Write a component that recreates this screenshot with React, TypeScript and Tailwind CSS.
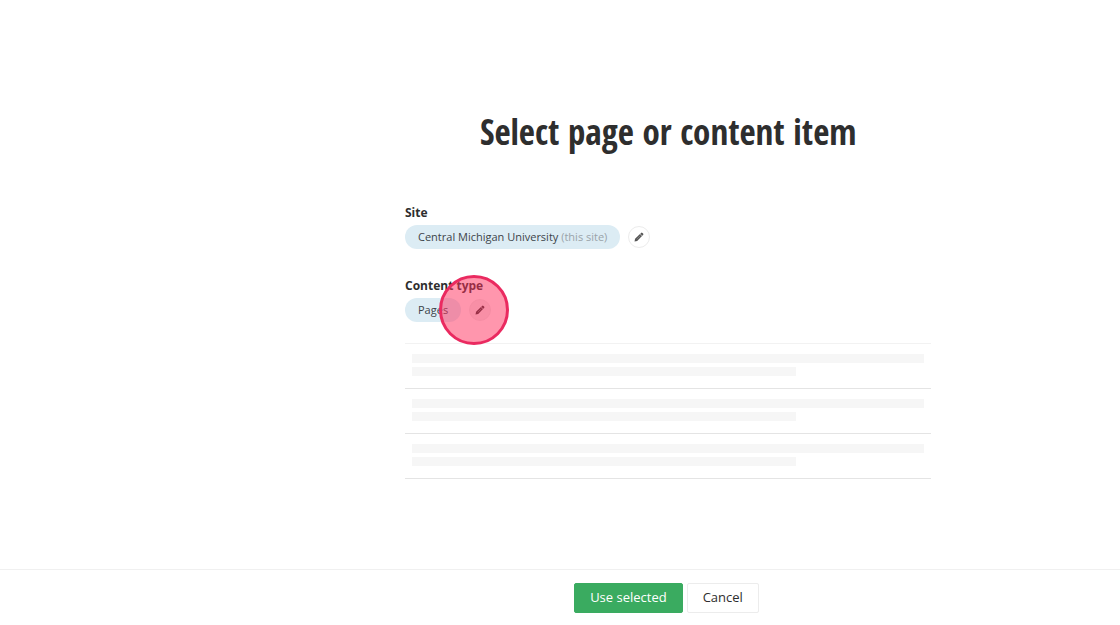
import clsx from "clsx";

const PencilIcon = () => {
  return (
    <svg viewBox="0 0 20 20" className="size-[10px]" fill="currentColor" aria-hidden="true">
      <path d="M1 19l1.2-5.4L12 4l4 4-9.6 9.8z" />
      <path d="M12.6 3.4l1.6-1.6a1.8 1.8 0 0 1 2.6 0l1.4 1.4a1.8 1.8 0 0 1 0 2.6l-1.6 1.6z" />
      <path d="M5.5 14.5l7.5-7.5" stroke="#a3a3a3" strokeWidth="1" />
    </svg>
  );
};

interface FieldProps {
  label: string;
  value: string;
  note?: string;
  highlighted?: boolean;
}

const Field = ({ label, value, note, highlighted }: FieldProps) => {
  return (
    <div>
      <h2 className="text-[12px] leading-4 font-bold">{label}</h2>
      <div className="mt-1 flex items-center gap-2">
        <span className="h-6 rounded-full bg-[#dcecf4] px-[13px] text-[11px] leading-6 text-[#3c444a]">
          {value}
          {note && <span className="text-[#9aa3a9]"> {note}</span>}
        </span>
        <div className="relative">
          <button
            type="button"
            aria-label={`Edit ${label}`}
            className={clsx(
              "flex size-[22px] items-center justify-center rounded-full border border-[#ececec]",
              highlighted ? "bg-[#f0f0f0] text-[#2e2e2e]" : "bg-white text-[#555555]"
            )}
          >
            <PencilIcon />
          </button>
          {highlighted && (
            <div className="pointer-events-none absolute -top-6 -left-[30px] size-[70px] rounded-full border-3 border-[#ea2a60] bg-[#ff2d5c]/50" />
          )}
        </div>
      </div>
    </div>
  );
};

const PlaceholderRow = () => {
  return (
    <li className="border-b border-[#e4e4e4] px-[7px] pt-[10px] pb-3">
      <div className="h-[9px] bg-[#f6f6f6]" />
      <div className="mt-1 h-[9px] w-3/4 bg-[#f6f6f6]" />
    </li>
  );
};

const App = () => {
  return (
    <div className="flex min-h-screen flex-col bg-white font-['Open_Sans',sans-serif] text-[#2e2e2e]">
      <main className="ml-[405px] w-[47%] grow pt-[110px]">
        <h1 className="text-center font-['Open_Sans_Condensed','Open_Sans',sans-serif] text-[35px] leading-[44px] font-bold">
          Select page or content item
        </h1>
        <div className="mt-[51px] flex flex-col gap-[29px]">
          <Field label="Site" value="Central Michigan University" note="(this site)" />
          <Field label="Content type" value="Pages" highlighted />
        </div>
        <ul className="mt-[21px] border-t border-[#f2f2f2]">
          <PlaceholderRow />
          <PlaceholderRow />
          <PlaceholderRow />
        </ul>
      </main>
      <footer className="flex h-14 items-center justify-center gap-1 border-t border-[#f0f0f0] pl-[213px] text-[13px]">
        <button
          type="button"
          className="h-[30px] rounded-xs border border-[#3aab60] bg-[#3aab60] px-[15px] text-white"
        >
          Use selected
        </button>
        <button type="button" className="h-[30px] rounded-xs border border-[#ececec] px-[15px]">
          Cancel
        </button>
      </footer>
    </div>
  );
};

export default App;
